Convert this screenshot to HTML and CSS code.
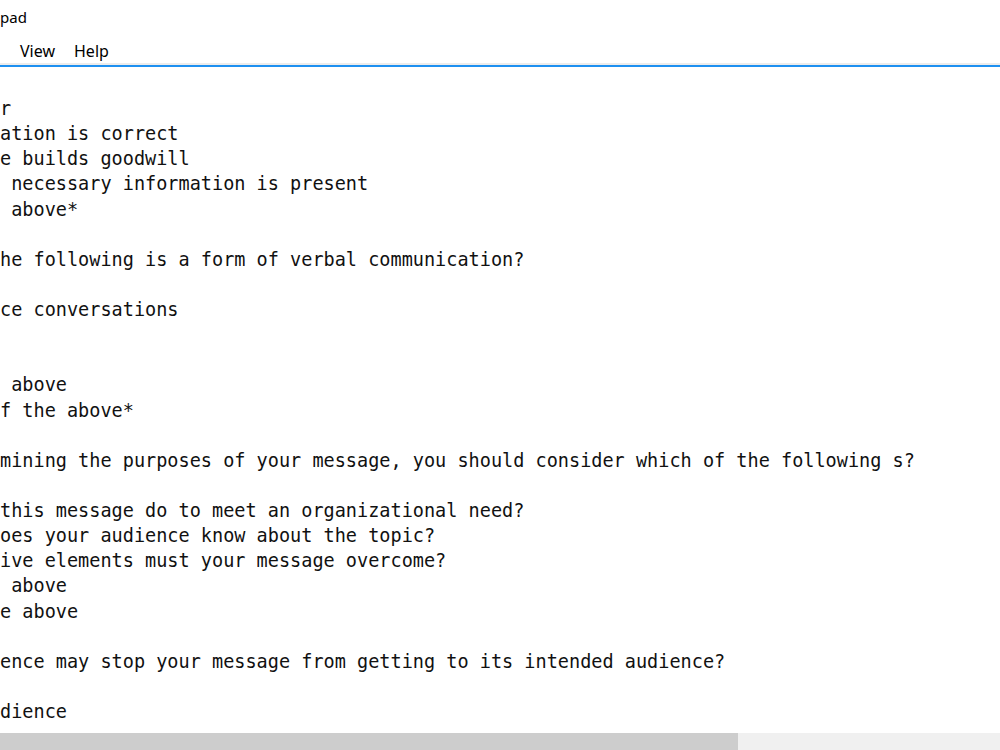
FILE: index.html
```html
<!DOCTYPE html>
<html lang="en">
<head>
    <meta charset="UTF-8">
    <title>Notepad</title>
    <link rel="stylesheet" href="styles.css">
</head>
<body>
    <div class="window">
        <div class="titlebar">pad</div>
        <div class="menubar">
            <span class="menu-item">View</span>
            <span class="menu-item">Help</span>
        </div>
        <div class="editor">
<pre class="text">r
ation is correct
e builds goodwill
 necessary information is present
 above*

he following is a form of verbal communication?

ce conversations


 above
f the above*

mining the purposes of your message, you should consider which of the following s?

this message do to meet an organizational need?
oes your audience know about the topic?
ive elements must your message overcome?
 above
e above

ence may stop your message from getting to its intended audience?

dience</pre>
        </div>
        <div class="hscroll">
            <div class="thumb"></div>
        </div>
    </div>
</body>
</html>
```

FILE: styles.css
```css
body {
    margin: 0;
    padding: 0;
    background-color: white;
    font-family: "Noto Sans", "Open Sans", sans-serif;
    color: #000;
}
.window {
    display: flex;
    flex-direction: column;
    width: 1000px;
    height: 750px;
    overflow: hidden;
}
.titlebar {
    height: 34px;
    line-height: 34px;
    font-size: 15px;
    padding-left: 0;
    color: #000;
}
.menubar {
    display: flex;
    gap: 19px;
    height: 31px;
    align-items: center;
    padding: 4px 0 0 20px;
    box-sizing: border-box;
    font-size: 16px;
    border-bottom: 2px solid #ececec;
}
.editor {
    flex: 1;
    overflow: hidden;
    border-top: 2px solid #1e90f0;
    padding-top: 29px;
}
.text {
    margin: 0;
    font-family: "DejaVu Sans Mono", "Liberation Mono", monospace;
    font-size: 18.55px;
    line-height: 25.125px;
    color: #111;
    white-space: pre;
}
.hscroll {
    height: 17px;
    background-color: #f0f0f0;
}
.thumb {
    width: 738px;
    height: 100%;
    background-color: #cdcdcd;
}
```
